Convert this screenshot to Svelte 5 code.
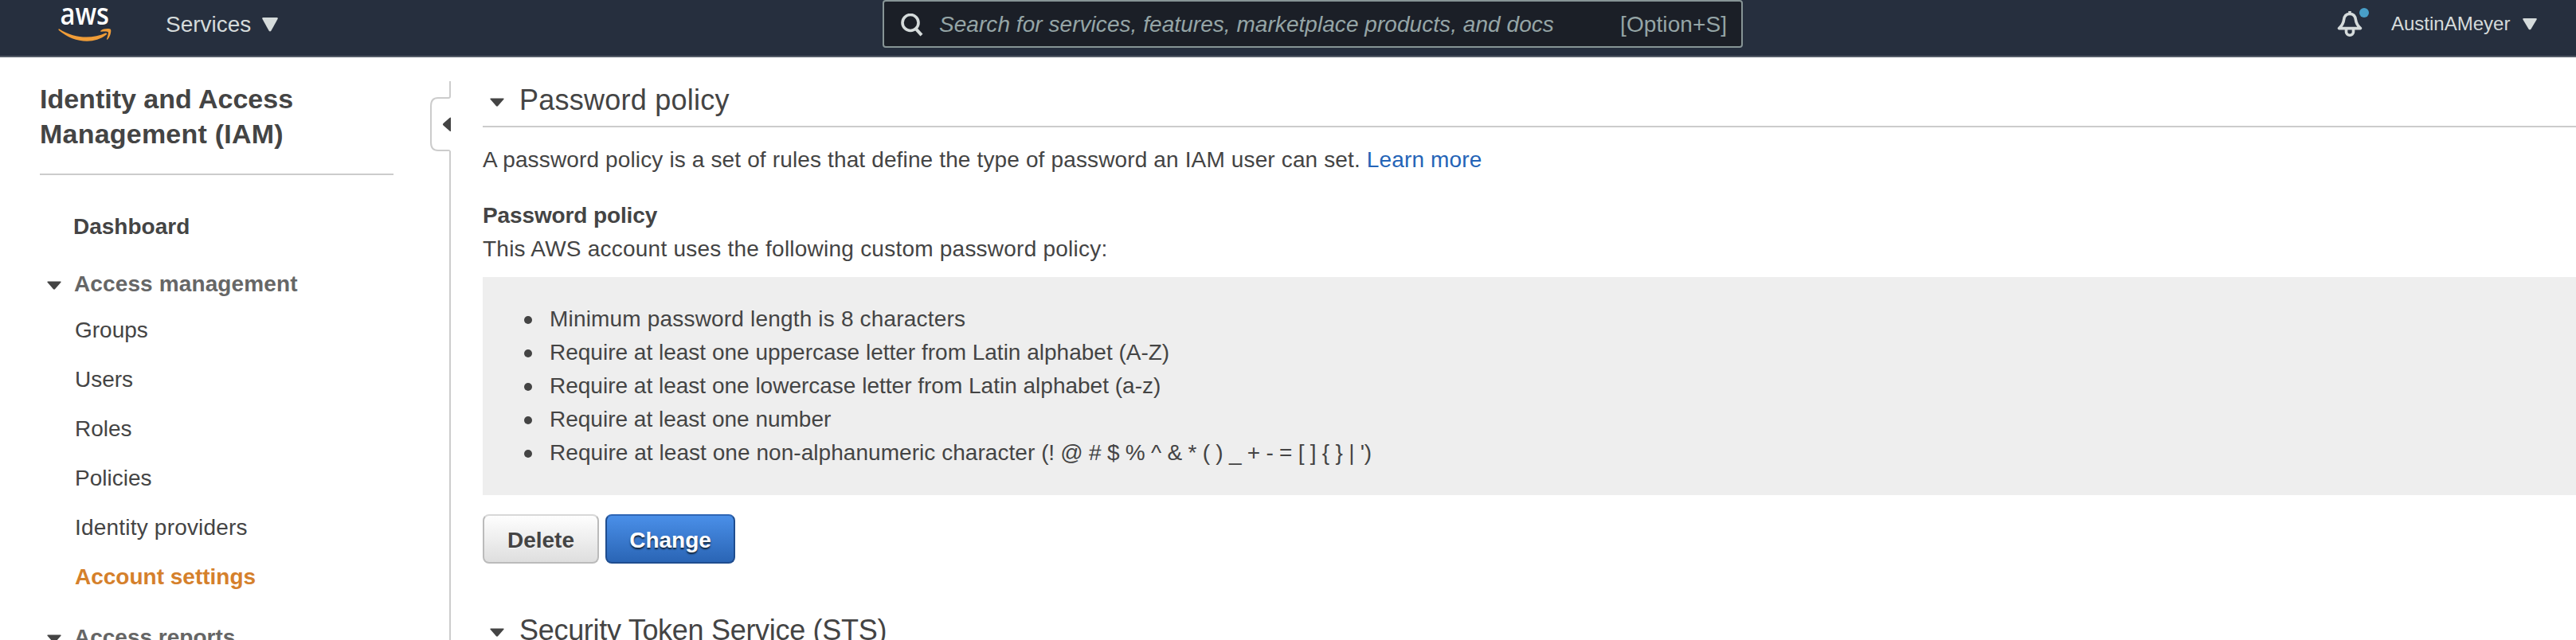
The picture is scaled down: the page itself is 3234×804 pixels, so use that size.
<script>
  const links = ['Groups', 'Users', 'Roles', 'Policies', 'Identity providers'];
  const rules = [
    'Minimum password length is 8 characters',
    'Require at least one uppercase letter from Latin alphabet (A-Z)',
    'Require at least one lowercase letter from Latin alphabet (a-z)',
    'Require at least one number'
  ];
  const symbols = "(! @ # $ % ^ & * ( ) _ + - = [ ] { } | ')";
</script>

{#snippet caret()}
  <svg class="caret" width="18" height="11" viewBox="0 0 18 11"><path d="M1 .5h16q1 .4.4 1.2L10 10.3q-1 .9-2 0L.6 1.7Q0 .9 1 .5z" fill="#444" /></svg>
{/snippet}

<div class="page">
  <header>
    <svg class="logo" width="68" height="52" viewBox="0 -6 68 52">
      <text x="2.500" y="23" textLength="61.500" lengthAdjust="spacingAndGlyphs">aws</text>
      <path d="M1.500 28.500C21 41 43 41 59.500 33.500C61 33 62 34.500 60.500 35.500C44 49 18 45 .8 30C0 29 .5 28 1.500 28.500z" fill="#f09d38" />
      <path d="M53.500 30.500C57 27.500 65 27.500 66 29C67 31 65.500 38.500 62 41.500C61.300 42 60.700 41.700 61 41C62 38.500 63.500 33.500 62.700 32.300C62 31.200 57.500 31.500 54.500 31.800C53.300 32 52.800 31.300 53.500 30.500z" fill="#f09d38" />
    </svg>
    <div class="services">Services</div>
    <svg class="srv-arrow" width="20" height="18" viewBox="0 0 20 18"><path d="M1.500 0h17q2 0 1 2L11.500 16.500q-1.500 2-3 0L.5 2Q-.5 0 1.500 0z" fill="#d5dbdb" /></svg>
    <div class="search">
      <svg width="28" height="30" viewBox="0 0 28 30" fill="none" stroke="#d5dbdb"><circle cx="12" cy="11.500" r="10" stroke-width="3.600" /><path d="M18.500 18.800L26 27.200" stroke-width="4" /></svg>
      <span class="hint">Search for services, features, marketplace products, and docs</span>
      <span class="key">[Option+S]</span>
    </div>
    <svg class="bell" width="42" height="38" viewBox="0 0 42 38">
      <g fill="none" stroke="#d5dbdb" stroke-width="3.600" stroke-linejoin="round">
        <path d="M16 7.500C11 7.500 9 10.500 8.500 15C8 19.500 6 22.500 2.500 25.600H29.500C26 22.500 24 19.500 23.500 15C23 10.500 21 7.500 16 7.500z" />
        <path d="M11.500 26.500V30a4.500 4.200 0 0 0 9 0V26.500" />
        <path d="M16 4v3" stroke-width="3.600" />
      </g>
      <circle cx="34" cy="6" r="6" fill="#489fc8" />
    </svg>
    <div class="user">AustinAMeyer</div>
    <svg class="user-arrow" width="18" height="15" viewBox="0 0 18 15"><path d="M1.500 0h15q2 0 1 1.700L10.500 13.500q-1.500 1.700-3 0L.5 1.700Q-.5 0 1.500 0z" fill="#d5dbdb" /></svg>
  </header>

  <div class="body">
    <aside>
      <h1>Identity and Access<br /><span>Management (IAM)</span></h1>
      <nav>
        <div class="dash">Dashboard</div>
        <div class="group">{@render caret()}<span>Access management</span></div>
        {#each links as link}
          <a href="#top" class="item" class:wide={link === 'Identity providers'}>{link}</a>
        {/each}
        <a href="#top" class="item active">Account settings</a>
        <div class="group reports">{@render caret()}<span>Access reports</span></div>
      </nav>
    </aside>
    <div class="rail">
      <svg width="28" height="88" viewBox="0 0 28 88" fill="none">
        <path d="M25 0V19q0 2-2 2H10Q1 21 1 31V77Q1 87 10 87H23q2 0 2 2" stroke="#ccc" stroke-width="2" />
        <path d="M26 45.500V63q-1 0-1.500-.5L16.500 55.500q-1.300-1.300 0-2.500L24.500 46q.5-.5 1.500-.5z" fill="#444" />
      </svg>
      <div class="line"></div>
    </div>
    <main>
      <h2>{@render caret()}<span class="t1">Password policy</span></h2>
      <p class="intro">A password policy is a set of rules that define the type of password an IAM user can set. <a href="#top">Learn more</a></p>
      <h3>Password policy</h3>
      <p class="uses">This AWS account uses the following custom password policy:</p>
      <ul>
        {#each rules as rule, i}
          <li class="r{i}">{rule}</li>
        {/each}
        <li><span>Require at least one non-alphanumeric character <span class="symbols">{symbols}</span></span></li>
      </ul>
      <div class="buttons">
        <button class="delete">Delete</button>
        <button class="change">Change</button>
      </div>
      <h2 class="sts">{@render caret()}<span class="t2">Security Token Service (STS)</span></h2>
    </main>
  </div>
</div>

<style>
  :global(body) { overflow: hidden; }
  .page {
    width: 3234px;
    height: 804px;
    overflow: hidden;
    background: #fff;
    color: #444;
    font: 28px/42px "Liberation Sans", Arial, sans-serif;
  }
  * { box-sizing: border-box; }
  svg { display: block; flex: none; }
  h1, h2, h3, p, ul { margin: 0; padding: 0; }
  a { color: inherit; text-decoration: none; }
  header {
    height: 72px;
    display: flex;
    align-items: flex-start;
    background: #262f3e;
    border-bottom: 2px solid #545b67;
    color: #d5dbdb;
    white-space: nowrap;
  }
  .logo { margin: 2px 0 0 73px; overflow: visible; }
  .logo text { font: 600 37px "Open Sans", sans-serif; fill: #fff; }
  .services { width: 121px; margin: 10px 0 0 67px; }
  .srv-arrow { margin-top: 22px; }
  .search {
    width: 1080px;
    height: 60px;
    margin-left: 759px;
    padding: 8px 18px 0 21px;
    display: flex;
    background: #1b1f27;
    border: 2px solid #879596;
    border-radius: 4px;
    color: #95a5a6;
  }
  .search svg { margin: 7px 20px 0 0; }
  .hint { font-style: italic; letter-spacing: 0.05px; }
  .key { margin-left: auto; letter-spacing: 0.08px; }
  .bell { margin: 10px 0 0 746px; }
  .user { width: 165px; margin: 9px 0 0 26px; font-size: 24px; line-height: 42px; }
  .user-arrow { margin-top: 23px; }
  .body { height: 732px; display: flex; }
  aside { width: 494px; padding: 30px 0 0 50px; flex: none; }
  h1 {
    height: 118px;
    border-bottom: 2px solid #ccc;
    font-size: 34px;
    line-height: 44px;
    white-space: nowrap;
  }
  h1 span { letter-spacing: 0.22px; }
  nav { padding: 44px 0 0 43px; white-space: nowrap; }
  .dash { font-weight: bold; margin-left: -1px; }
  .group {
    display: flex;
    align-items: center;
    height: 42px;
    margin: 30px 0 6px -34px;
    color: #666;
    font-weight: bold;
    letter-spacing: 0.12px;
    gap: 16px;
  }
  .group .caret { margin-top: 2px; }
  .item { display: block; height: 62px; padding-top: 10px; margin-left: 1px; }
  .wide { letter-spacing: 0.2px; }
  .active { color: #d5802b; font-weight: bold; }
  .reports { margin-top: 24px; letter-spacing: 0; }
  .rail { width: 28px; margin: 30px 0 0 46px; display: flex; flex-direction: column; flex: none; }
  .line { width: 2px; flex: 1; margin-left: 24px; background: #ccc; }
  main { flex: 1; padding: 30px 0 0 38px; white-space: nowrap; }
  h2 {
    height: 58px;
    display: flex;
    border-bottom: 2px solid #ccc;
    padding-left: 9px;
    gap: 19px;
    font-size: 36px;
    line-height: 48px;
    font-weight: normal;
  }
  h2 .caret { margin-top: 21px; }
  .t1 { letter-spacing: 0.25px; }
  .t2 { letter-spacing: -0.3px; }
  .intro { margin-top: 20px; letter-spacing: 0.14px; }
  .intro a { color: #2464b7; }
  h3 { margin-top: 28px; font-size: 28px; line-height: 42px; letter-spacing: -0.12px; }
  .uses { letter-spacing: 0.23px; }
  ul { height: 274px; margin-top: 14px; padding: 32px 0 0 52px; background: #eee; list-style: none; }
  li { display: flex; align-items: center; gap: 22px; }
  li::before { content: ""; width: 10px; height: 10px; margin-top: 2px; border-radius: 50%; background: #444; }
  .r0 { letter-spacing: 0.18px; }
  li > span { letter-spacing: 0.05px; }
  .symbols { letter-spacing: -0.24px; }
  .buttons { display: flex; gap: 8px; margin-top: 24px; }
  button {
    height: 62px;
    padding: 3px 0 0;
    border-radius: 8px;
    font: bold 28px/42px "Liberation Sans", Arial, sans-serif;
  }
  .delete {
    width: 146px;
    color: #444;
    border: 2px solid #bbb;
    border-top-color: #d8d8d8;
    background: linear-gradient(#fff, #ddd) border-box;
    text-shadow: 0 2px 0 #eee;
  }
  .change {
    width: 163px;
    color: #fff;
    border: 2px solid #1f4d8f;
    border-top-color: #2f66b5;
    background: linear-gradient(#4a8fe8, #2a65b5);
    text-shadow: 0 2px 2px #123;
  }
  .sts { margin-top: 60px; }
</style>
